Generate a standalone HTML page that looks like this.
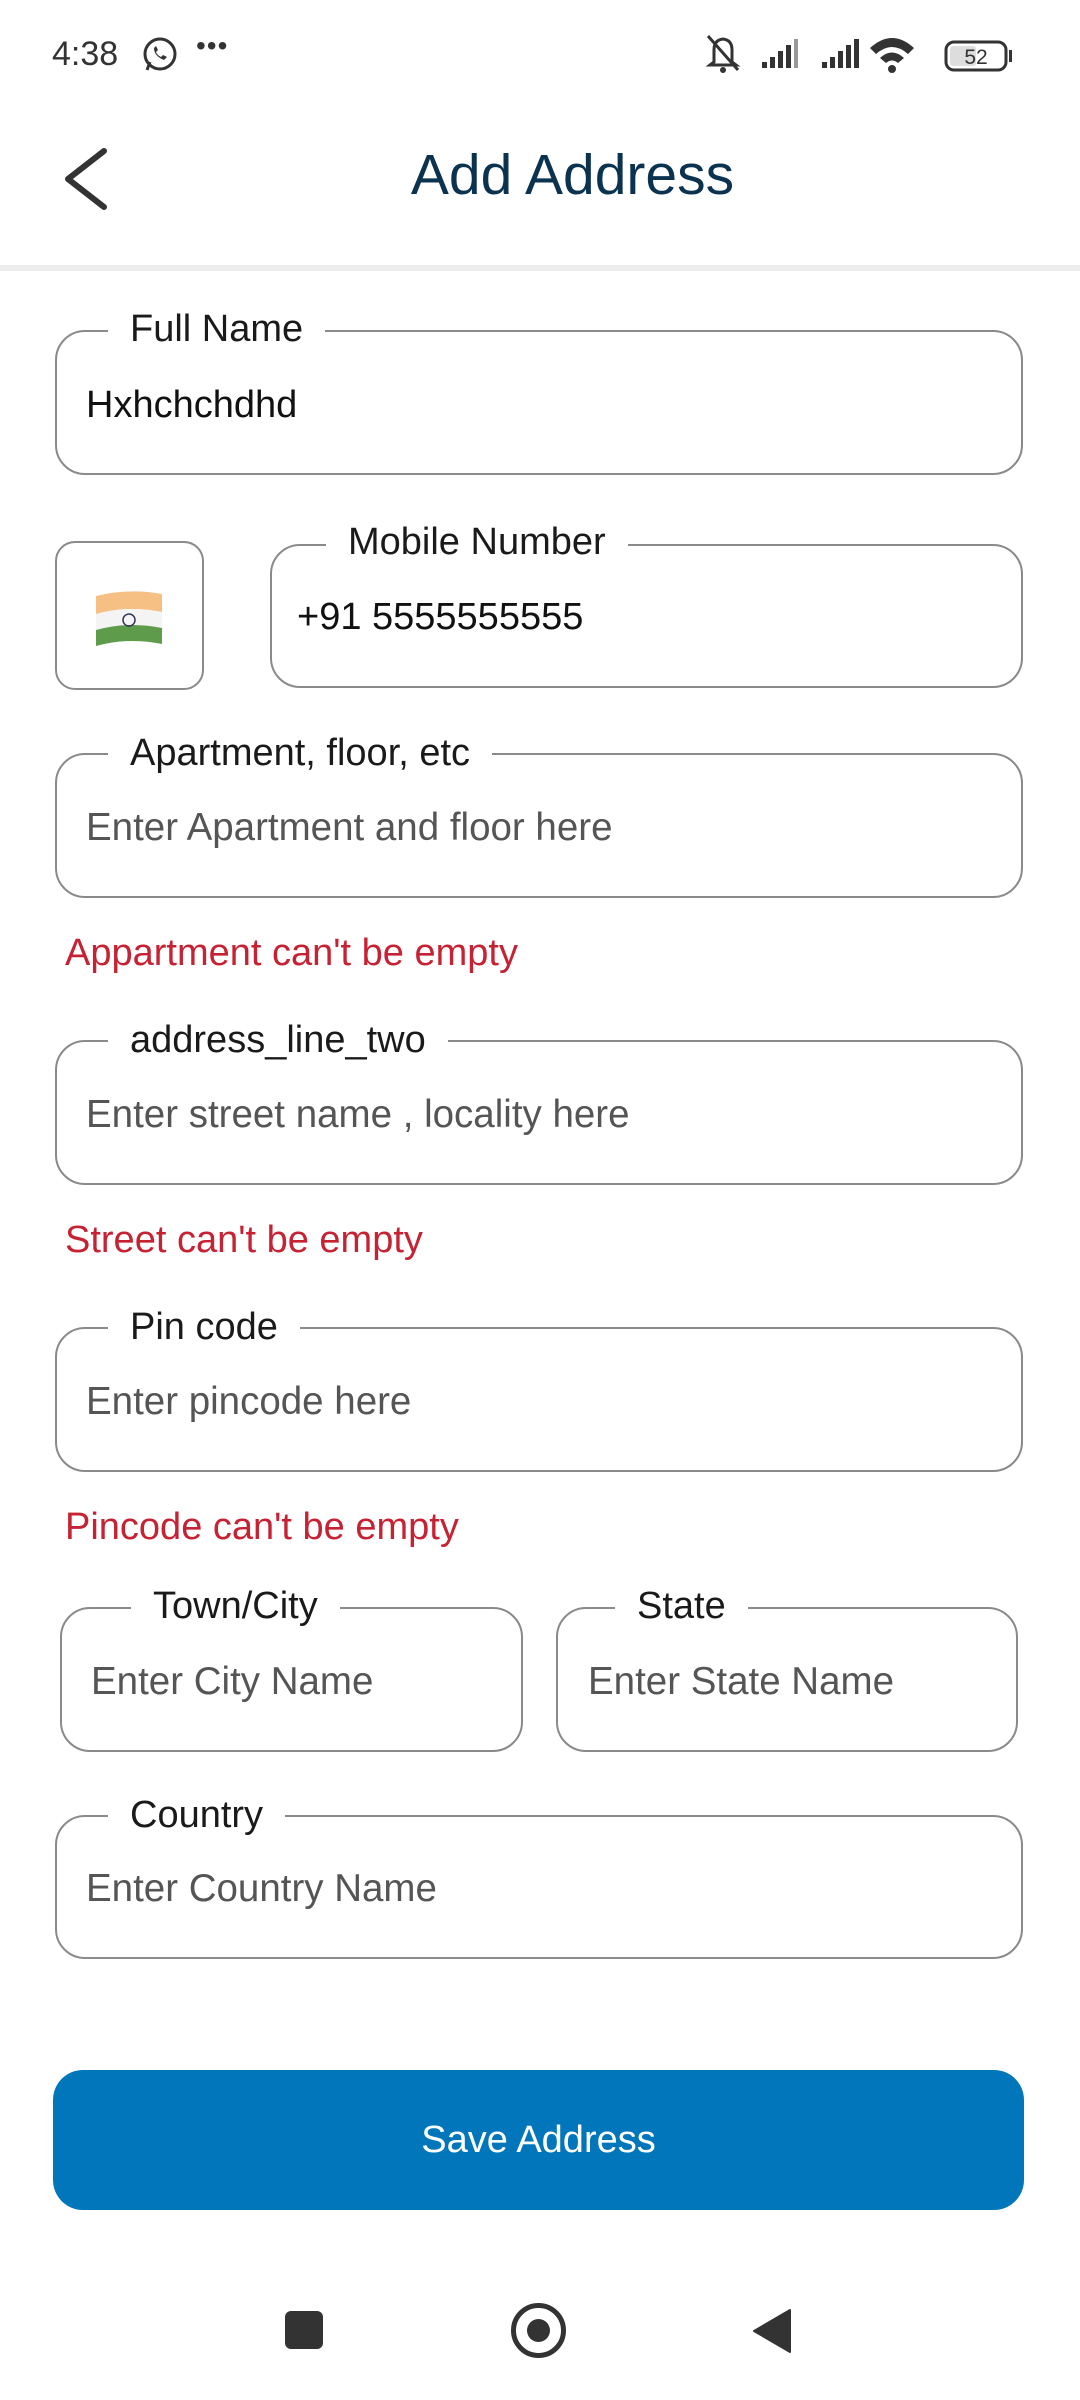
<!DOCTYPE html>
<html><head><meta charset="utf-8"><style>
*{margin:0;padding:0;box-sizing:border-box}
body{width:1080px;height:2400px;background:#fff;position:relative;overflow:hidden;font-family:"Liberation Sans",sans-serif}
.a{position:absolute}
.box{position:absolute;border:2.5px solid #8a8a8a;border-radius:30px}
.lbl{position:absolute;background:#fff;padding:0 22px;font-size:38px;color:#1a1a1a;line-height:42px;white-space:nowrap}
.ph{position:absolute;font-size:38.5px;color:#555;line-height:44px;white-space:nowrap}
.val{position:absolute;font-size:38px;color:#111;line-height:44px;white-space:nowrap}
.err{position:absolute;font-size:38px;color:#c62233;line-height:42px;white-space:nowrap;left:65px}
</style></head><body>
<div class="a" style="left:52px;top:32px;font-size:34px;color:#333;line-height:44px">4:38</div>
<svg class="a" style="left:141px;top:36px" width="38" height="38" viewBox="0 0 38 38"><circle cx="19" cy="18" r="15" fill="none" stroke="#333" stroke-width="3"/><path d="M6 34 L9 26" stroke="#333" stroke-width="3"/><path d="M13 12 q0 8 10 12 l3-3 -4-2 -2 2 q-4-2-5-5 l2-2 -2-4z" fill="#333"/></svg>
<div class="a" style="left:196px;top:30px;font-size:28px;color:#333;letter-spacing:1px">•••</div>
<svg class="a" style="left:700px;top:30px" width="320" height="48" viewBox="0 0 320 48">
<path d="M14 32 L14 20 Q14 10 23 9 Q32 10 32 20 L32 32 L36 35 L10 35 Z" fill="none" stroke="#333" stroke-width="3"/><path d="M8 6 L38 40" stroke="#333" stroke-width="3"/><circle cx="23" cy="40" r="3" fill="#333"/>
<g fill="#333"><rect x="62" y="32" width="5" height="6"/><rect x="70" y="27" width="5" height="11"/><rect x="78" y="21" width="5" height="17"/><rect x="86" y="15" width="5" height="23"/><rect x="94" y="9" width="4" height="29" fill="#999"/>
<rect x="122" y="32" width="5" height="6"/><rect x="130" y="27" width="5" height="11"/><rect x="138" y="21" width="5" height="17"/><rect x="146" y="15" width="5" height="23"/><rect x="154" y="9" width="5" height="29"/></g>
<path d="M170 18 Q192 -2 214 18 L208 24 Q192 10 176 24Z M180 28 Q192 17 204 28 L198 33 Q192 28 186 33Z" fill="#333"/><circle cx="192" cy="39" r="4" fill="#333"/>
<rect x="246" y="12" width="60" height="28" rx="8" fill="none" stroke="#333" stroke-width="3"/><rect x="309" y="20" width="3" height="12" fill="#333"/><rect x="250" y="16" width="26" height="20" rx="3" fill="#ddd"/>
<text x="276" y="34" font-size="21" text-anchor="middle" fill="#333" font-family="Liberation Sans">52</text></svg>
<svg class="a" style="left:60px;top:146px" width="52" height="66" viewBox="0 0 52 66"><path d="M44 5 L8 33 L44 61" fill="none" stroke="#333" stroke-width="6" stroke-linecap="round" stroke-linejoin="round"/></svg>
<div class="a" style="left:0;width:1145px;text-align:center;top:140px;font-size:57px;color:#0b3350;line-height:70px">Add Address</div>
<div class="a" style="left:0;top:265px;width:1080px;height:6px;background:#ececec"></div>
<div class="box" style="left:55px;top:330px;width:968px;height:145px"></div>
<div class="lbl" style="left:108px;top:308px">Full Name</div>
<div class="val" style="left:86px;top:383px">Hxhchchdhd</div>
<div class="box" style="left:55px;top:541px;width:149px;height:149px;border-radius:20px"></div>
<svg class="a" style="left:94px;top:588px" width="70" height="60" viewBox="0 0 70 60"><path d="M2 8 Q35 0 68 6 L68 24 Q35 17 2 26Z" fill="#f6c084"/><path d="M2 26 Q35 17 68 24 L68 40 Q35 33 2 42Z" fill="#f4f4f4"/><path d="M2 42 Q35 33 68 40 L68 56 Q35 49 2 58Z" fill="#5e9c4c"/><circle cx="35" cy="32" r="6" fill="none" stroke="#335" stroke-width="1.5"/></svg>
<div class="box" style="left:270px;top:544px;width:753px;height:144px"></div>
<div class="lbl" style="left:326px;top:521px">Mobile Number</div>
<div class="val" style="left:297px;top:595px">+91 5555555555</div>
<div class="box" style="left:55px;top:753px;width:968px;height:145px"></div>
<div class="lbl" style="left:108px;top:732px">Apartment, floor, etc</div>
<div class="ph" style="left:86px;top:806px">Enter Apartment and floor here</div>
<div class="err" style="top:932px">Appartment can't be empty</div>
<div class="box" style="left:55px;top:1040px;width:968px;height:145px"></div>
<div class="lbl" style="left:108px;top:1019px">address_line_two</div>
<div class="ph" style="left:86px;top:1093px">Enter street name , locality here</div>
<div class="err" style="top:1219px">Street can't be empty</div>
<div class="box" style="left:55px;top:1327px;width:968px;height:145px"></div>
<div class="lbl" style="left:108px;top:1306px">Pin code</div>
<div class="ph" style="left:86px;top:1380px">Enter pincode here</div>
<div class="err" style="top:1506px">Pincode can't be empty</div>
<div class="box" style="left:60px;top:1607px;width:463px;height:145px"></div>
<div class="lbl" style="left:131px;top:1585px">Town/City</div>
<div class="ph" style="left:91px;top:1660px">Enter City Name</div>
<div class="box" style="left:556px;top:1607px;width:462px;height:145px"></div>
<div class="lbl" style="left:615px;top:1585px">State</div>
<div class="ph" style="left:588px;top:1660px">Enter State Name</div>
<div class="box" style="left:55px;top:1815px;width:968px;height:144px"></div>
<div class="lbl" style="left:108px;top:1794px">Country</div>
<div class="ph" style="left:86px;top:1867px">Enter Country Name</div>
<div class="a" style="left:53px;top:2070px;width:971px;height:140px;background:#0176bb;border-radius:30px;color:#fff;font-size:38px;text-align:center;line-height:140px">Save Address</div>
<div class="a" style="left:285px;top:2311px;width:38px;height:38px;background:#333;border-radius:6px"></div>
<div class="a" style="left:511px;top:2303px;width:55px;height:55px;border:5px solid #333;border-radius:50%"></div>
<div class="a" style="left:527px;top:2319px;width:23px;height:23px;background:#333;border-radius:50%"></div>
<svg class="a" style="left:752px;top:2308px" width="40" height="46" viewBox="0 0 40 46"><path d="M38 2 L38 44 L2 23Z" fill="#333" stroke="#333" stroke-width="2" stroke-linejoin="round"/></svg>
</body></html>
